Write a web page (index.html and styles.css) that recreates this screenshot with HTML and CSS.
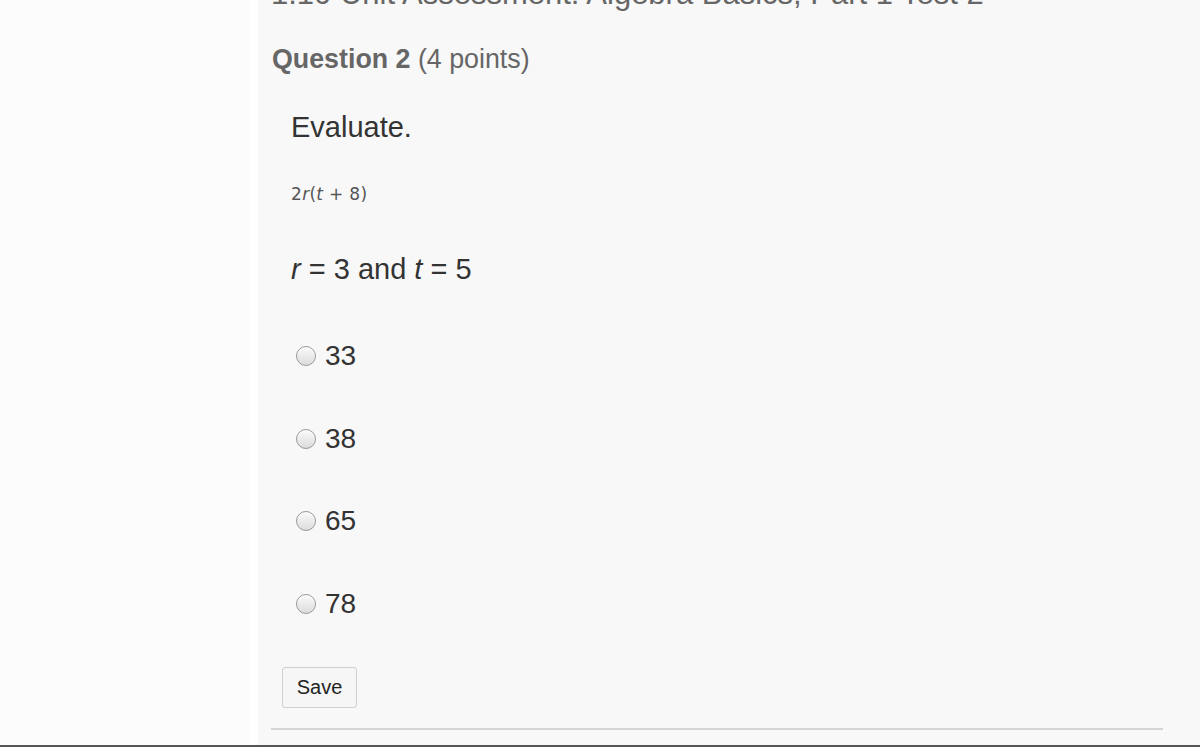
FILE: index.html
```html
<!DOCTYPE html>
<html>
<head>
<meta charset="utf-8">
<link rel="stylesheet" href="styles.css">
</head>
<body>
<div class="page">
  <aside class="sidebar"></aside>
  <div class="gutter"></div>
  <main class="main">
    <h1 class="title">1.10 Unit Assessment: Algebra Basics, Part 1 Test 2</h1>
    <h2 class="qhead"><strong>Question 2</strong> (4 points)</h2>
    <div class="qbody">
      <p class="prompt">Evaluate.</p>
      <p class="expr">2<i>r</i>(<i>t</i> + 8)</p>
      <p class="given"><i>r</i> = 3 and <i>t</i> = 5</p>
      <ul class="options">
        <li class="option"><span class="radio"></span><span>33</span></li>
        <li class="option"><span class="radio"></span><span>38</span></li>
        <li class="option"><span class="radio"></span><span>65</span></li>
        <li class="option"><span class="radio"></span><span>78</span></li>
      </ul>
      <button class="save">Save</button>
    </div>
    <hr class="rule">
  </main>
</div>
<div class="bottombar"></div>
</body>
</html>
```

FILE: styles.css
```css
html, body {
  margin: 0;
  padding: 0;
  height: 747px;
  overflow: hidden;
  background: #f8f8f8;
  font-family: "Liberation Sans", Arial, sans-serif;
}
.page {
  display: flex;
  height: 745px;
}
.sidebar {
  width: 250px;
  background: #fcfcfc;
  flex: none;
}
.gutter {
  width: 8px;
  background: #fefefe;
  flex: none;
}
.main {
  flex: 1;
  padding-left: 13px;
  padding-right: 37px;
  display: flex;
  flex-direction: column;
  background: #f8f8f8;
}
.title {
  margin: -24px 0 0 0;
  font-size: 31px;
  font-weight: normal;
  line-height: 36px;
  color: #666;
  white-space: nowrap;
}
.qhead {
  margin: 30px 0 0 1px;
  font-size: 26.8px;
  line-height: 34px;
  font-weight: normal;
  color: #666;
}
.qhead strong {
  font-weight: bold;
}
.qbody {
  padding-left: 20px;
  color: #333;
}
.prompt {
  margin: 33px 0 0 0;
  font-size: 29px;
  line-height: 36px;
}
.expr {
  margin: 38px 0 0 0;
  font-family: "DejaVu Sans", sans-serif;
  font-size: 17px;
  line-height: 22px;
  color: #555;
  letter-spacing: 0.3px;
}
.expr i {
  font-style: italic;
}
.given {
  margin: 46px 0 0 0;
  font-size: 29px;
  line-height: 36px;
}
.options {
  list-style: none;
  margin: 51px 0 0 0;
  padding: 0;
  display: flex;
  flex-direction: column;
  gap: 46.5px;
}
.option {
  display: flex;
  align-items: center;
  gap: 9px;
  height: 36px;
  font-size: 28px;
  color: #333;
  padding-left: 5px;
}
.radio {
  width: 18px;
  height: 18px;
  border-radius: 50%;
  border: 1px solid #999;
  background: linear-gradient(#fafafa, #dcdcdc);
  box-shadow: inset 0 1px 1px #fff;
  flex: none;
}
.save {
  align-self: flex-start;
  margin-top: 45px;
  margin-left: -9px;
  width: 75px;
  height: 41px;
  border: 1px solid #d0d0d0;
  border-radius: 3px;
  background: #f6f6f6;
  font-family: "Liberation Sans", Arial, sans-serif;
  font-size: 20px;
  color: #222;
  padding: 0;
}
.rule {
  margin: 20px 0 0 0;
  border: none;
  height: 2px;
  background: #d4d4d4;
}
.bottombar {
  height: 2px;
  background: #555;
}
```
